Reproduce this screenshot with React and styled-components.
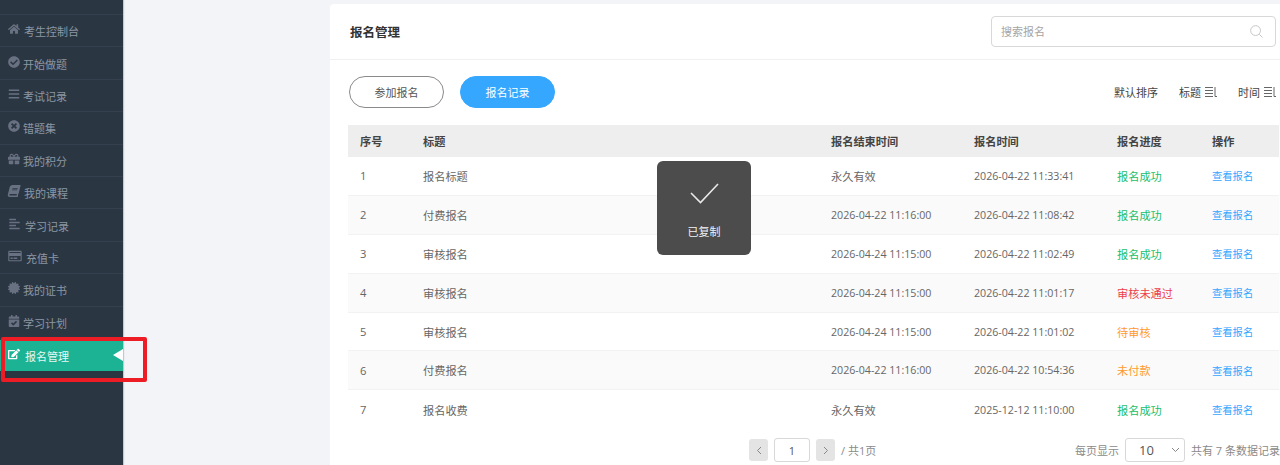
import React from "react";
import styled, { createGlobalStyle } from "styled-components";
import {
  FaHome, FaCheckCircle, FaBars, FaTimesCircle, FaGift, FaBook, FaAlignLeft,
  FaRegCreditCard, FaCertificate, FaCalendarCheck, FaEdit,
} from "react-icons/fa";

const font = `"Open Sans", "Noto Sans CJK SC", sans-serif`;

const Global = createGlobalStyle`
  html, body { margin: 0; padding: 0; height: 465px; overflow: hidden; background: #f3f4f8; }
  body { font-family: ${font}; }
  #root { height: 465px; }
  * { box-sizing: border-box; }
`;

const Page = styled.div`
  position: relative;
  display: flex;
  width: 1280px;
  height: 465px;
  overflow: hidden;
`;

const Sidebar = styled.nav`
  flex: 0 0 123px;
  width: 123px;
  height: 465px;
  padding-top: 14px;
  background: #2b3643;
  box-shadow: 1px 0 1px #c4c7cf;
`;

const NavItem = styled.div`
  position: relative;
  display: flex;
  align-items: center;
  gap: ${(p) => p.$gap}px;
  height: ${(p) => (p.$active ? 30.5 : 32.4)}px;
  margin-top: ${(p) => (p.$active ? 2.5 : 0)}px;
  padding: ${(p) => (p.$active ? "0" : "1px")} 0 0 8px;
  border-top: ${(p) => (p.$active ? "none" : "1px solid #353f4d")};
  background: ${(p) => (p.$active ? "#1bb394" : "transparent")};
  color: ${(p) => (p.$active ? "#e6f7f3" : "#8c96a3")};
  font-size: 11px;
  svg {
    flex: none;
    height: 12px;
    margin-top: -4px;
    color: ${(p) => (p.$active ? "#ffffff" : "#687181")};
  }
  ${(p) => p.$active && `
    &::after {
      content: "";
      position: absolute;
      right: 0;
      top: 9px;
      border-style: solid;
      border-width: 6.5px 10px 6.5px 0;
      border-color: transparent #ffffff transparent transparent;
    }
  `}
`;

const Highlight = styled.div`
  position: absolute;
  left: 1px;
  top: 337px;
  width: 146px;
  height: 45px;
  border: 4px solid #ee1c25;
  border-radius: 2px;
  pointer-events: none;
`;

const Main = styled.main`
  flex: 0 0 950px;
  width: 950px;
  height: 461px;
  margin: 4px 0 0 207px;
  background: #ffffff;
  border-radius: 4px 0 0 0;
`;

const Header = styled.header`
  display: flex;
  align-items: center;
  justify-content: space-between;
  height: 56px;
  padding: 0 0 0 20px;
  border-bottom: 1px solid #f0f0f2;
`;

const PageTitle = styled.h1`
  margin: 0;
  font-size: 12.5px;
  font-weight: 700;
  color: #333333;
`;

const SearchBox = styled.div`
  display: flex;
  align-items: center;
  justify-content: space-between;
  width: 285px;
  height: 31px;
  margin: -1px 4px 0 0;
  padding: 0 12px 0 9px;
  border: 1px solid #d8d8d8;
  border-radius: 4px;
  font-size: 11px;
  color: #a5a5a5;
`;

const Toolbar = styled.div`
  display: flex;
  align-items: center;
  justify-content: space-between;
  height: 65px;
  padding: 0 0 1px 19px;
`;

const Tabs = styled.div`
  display: flex;
  gap: 16px;
`;

const Pill = styled.button`
  width: 95px;
  height: 32px;
  padding: 0;
  border-radius: 16px;
  border: 1px solid ${(p) => (p.$primary ? "#35a7ff" : "#8a8a8a")};
  background: ${(p) => (p.$primary ? "#35a7ff" : "#ffffff")};
  color: ${(p) => (p.$primary ? "#ffffff" : "#555555")};
  font-family: ${font};
  font-size: 11px;
`;

const Sorts = styled.div`
  display: flex;
  align-items: center;
  gap: 21px;
  width: 166px;
  flex: none;
  font-size: 11px;
  color: #444444;
  white-space: nowrap;
`;

const SortItem = styled.span`
  display: inline-flex;
  align-items: center;
  gap: 4px;
`;

const Table = styled.div`
  margin-left: 18px;
  width: 931px;
  font-size: 11.2px;
`;

const Row = styled.div`
  display: grid;
  grid-template-columns: 63px 408px 143px 143px 95px 79px;
  align-items: center;
  height: ${(p) => (p.$head ? 32 : 38.9)}px;
  background: ${(p) => (p.$head ? "#eeeeee" : p.$odd ? "#fafafa" : "#ffffff")};
  border-bottom: ${(p) => (p.$head ? "none" : "1px solid #f2f2f2")};
  font-weight: ${(p) => (p.$head ? 700 : 400)};
  color: ${(p) => (p.$head ? "#444444" : "#666666")};
  &:last-child { border-bottom: none; }
`;

const Cell = styled.div`
  padding-left: 12px;
  white-space: nowrap;
  color: ${(p) => p.$color || "inherit"};
  font-size: ${(p) => p.$size || "inherit"};
`;

const Footer = styled.div`
  display: flex;
  align-items: center;
  justify-content: space-between;
  height: 38px;
  padding-left: 419px;
  margin-top: 2px;
  font-size: 11px;
  color: #8a8a8a;
  white-space: nowrap;
`;

const Pager = styled.div`
  display: flex;
  align-items: center;
  gap: 6px;
`;

const PageArrow = styled.span`
  display: flex;
  align-items: center;
  justify-content: center;
  width: 19px;
  height: 22px;
  border-radius: 3px;
  background: #e4e4e4;
  color: #888888;
`;

const PageInput = styled.span`
  display: flex;
  align-items: center;
  justify-content: center;
  width: 36px;
  height: 24px;
  border: 1px solid #d8d8d8;
  border-radius: 3px;
  color: #555555;
  font-size: 11px;
`;

const PerPage = styled.div`
  display: flex;
  align-items: center;
  gap: 6px;
`;

const Select = styled.span`
  display: flex;
  align-items: center;
  justify-content: space-between;
  width: 60px;
  height: 24px;
  padding: 0 4px 0 13px;
  border: 1px solid #d8d8d8;
  border-radius: 3px;
  color: #555555;
  font-size: 13px;
`;

const Toast = styled.div`
  position: absolute;
  left: 657px;
  top: 161px;
  width: 94px;
  height: 94px;
  display: flex;
  flex-direction: column;
  align-items: center;
  border-radius: 6px;
  background: #4c4c4c;
  color: #f2f2f2;
  font-size: 11px;
  padding-top: 22px;
  gap: 19px;
`;

const SortIcon = () => (
  <svg width="12" height="10" viewBox="0 0 12 10" fill="none" stroke="#666" strokeWidth="1">
    <path d="M0 .5h8M0 3.5h8M0 6.5h8M0 9.5h8M10 0v9.5h2" />
  </svg>
);

const Chevron = ({ left }) => (
  <svg width="6" height="9" viewBox="0 0 6 9" fill="none" stroke="#888" strokeWidth="1">
    <path d={left ? "M5 1 1.5 4.5 5 8" : "M1 1l3.5 3.5L1 8"} />
  </svg>
);

const SkewedBook = styled(FaBook)`
  transform: skewX(-14deg);
`;

const nav = [
  [FaHome, "考生控制台", 12, 4],
  [FaCheckCircle, "开始做题", 12, 3],
  [FaBars, "考试记录", 12, 3],
  [FaTimesCircle, "错题集", 12, 3],
  [FaGift, "我的积分", 12, 3],
  [SkewedBook, "我的课程", 12, 4],
  [FaAlignLeft, "学习记录", 13, 4],
  [FaRegCreditCard, "充值卡", 14, 4],
  [FaCertificate, "我的证书", 12, 3],
  [FaCalendarCheck, "学习计划", 12, 3],
];

const G = "#19be6b", B = "#35a7ff", R = "#ed3f4c", O = "#ff9a2e";
const DATE = "10.65px";
const rows = [
  ["1", "报名标题", "永久有效", "2026-04-22 11:33:41", "报名成功", G],
  ["2", "付费报名", "2026-04-22 11:16:00", "2026-04-22 11:08:42", "报名成功", G],
  ["3", "审核报名", "2026-04-24 11:15:00", "2026-04-22 11:02:49", "报名成功", G],
  ["4", "审核报名", "2026-04-24 11:15:00", "2026-04-22 11:01:17", "审核未通过", R],
  ["5", "审核报名", "2026-04-24 11:15:00", "2026-04-22 11:01:02", "待审核", O],
  ["6", "付费报名", "2026-04-22 11:16:00", "2026-04-22 10:54:36", "未付款", O],
  ["7", "报名收费", "永久有效", "2025-12-12 11:10:00", "报名成功", G],
];

export default function App() {
  return (
    <Page>
      <Global />
      <Sidebar>
        {nav.map(([Icon, label, width, gap]) => (
          <NavItem key={label} $gap={gap}>
            <Icon size={width} />
            <span>{label}</span>
          </NavItem>
        ))}
        <NavItem $active $gap={5}>
          <FaEdit size={12} />
          <span>报名管理</span>
        </NavItem>
      </Sidebar>
      <Main>
        <Header>
          <PageTitle>报名管理</PageTitle>
          <SearchBox>
            <span>搜索报名</span>
            <svg width="13" height="13" viewBox="0 0 14 14" fill="none" stroke="#c4c4c4" strokeWidth="1">
              <circle cx="6" cy="6" r="5.3" />
              <path d="M10 10l3.5 3.5" />
            </svg>
          </SearchBox>
        </Header>
        <Toolbar>
          <Tabs>
            <Pill>参加报名</Pill>
            <Pill $primary>报名记录</Pill>
          </Tabs>
          <Sorts>
            <span>默认排序</span>
            <SortItem>标题 <SortIcon /></SortItem>
            <SortItem>时间 <SortIcon /></SortItem>
          </Sorts>
        </Toolbar>
        <Table>
          <Row $head>
            <Cell>序号</Cell>
            <Cell>标题</Cell>
            <Cell>报名结束时间</Cell>
            <Cell>报名时间</Cell>
            <Cell>报名进度</Cell>
            <Cell>操作</Cell>
          </Row>
          {rows.map((r, i) => (
            <Row key={r[0]} $odd={i % 2 === 1}>
              <Cell>{r[0]}</Cell>
              <Cell>{r[1]}</Cell>
              <Cell $size={r[2].startsWith("20") ? DATE : undefined}>{r[2]}</Cell>
              <Cell $size={DATE}>{r[3]}</Cell>
              <Cell $color={r[5]}>{r[4]}</Cell>
              <Cell $color={B} $size="10.3px">查看报名</Cell>
            </Row>
          ))}
        </Table>
        <Footer>
          <Pager>
            <PageArrow><Chevron left /></PageArrow>
            <PageInput>1</PageInput>
            <PageArrow><Chevron /></PageArrow>
            <span>/ 共1页</span>
          </Pager>
          <PerPage>
            <span>每页显示</span>
            <Select>
              10
              <svg width="9" height="6" viewBox="0 0 9 6" fill="none" stroke="#888" strokeWidth="1">
                <path d="M1 1l3.5 3.5L8 1" />
              </svg>
            </Select>
            <span>共有 7 条数据记录</span>
          </PerPage>
        </Footer>
      </Main>
      <Toast>
        <svg width="29" height="21" viewBox="0 0 29 21" fill="none" stroke="#e8e8e8" strokeWidth="1.6">
          <path d="M1 10l9.5 9.5L28 1" />
        </svg>
        <span>已复制</span>
      </Toast>
      <Highlight />
    </Page>
  );
}
